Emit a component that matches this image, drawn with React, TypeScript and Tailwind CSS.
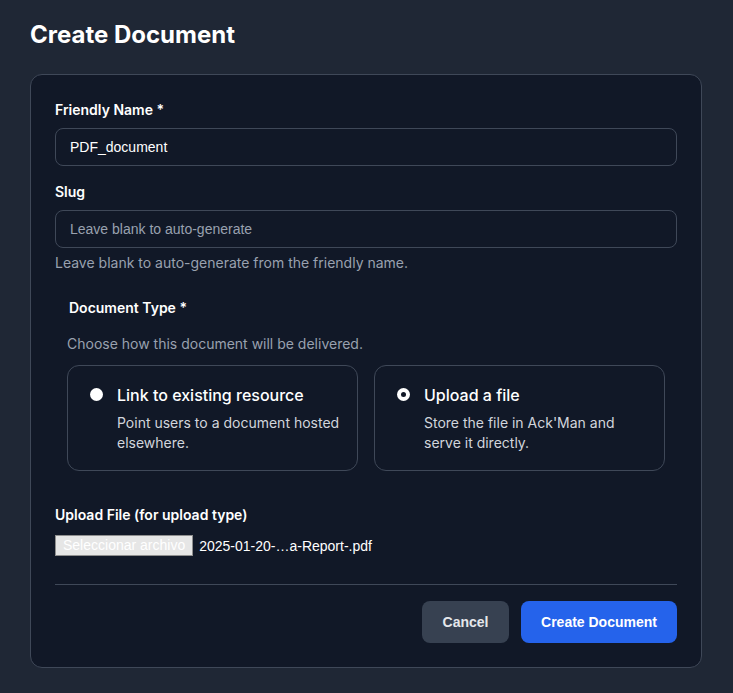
import React from 'react';

const RadioCard: React.FC<{ title: string; lines: string[]; checked?: boolean }> = ({ title, lines, checked }) => (
  <label className="flex-1 flex gap-[14px] rounded-xl border border-[#3f4858] pl-[22px] pr-3 pt-[17px] pb-[17px] cursor-pointer">
    <span className="mt-[5px] shrink-0">
      {checked ? (
        <span className="w-[13px] h-[13px] rounded-full bg-white flex items-center justify-center">
          <span className="block w-[5px] h-[5px] rounded-full bg-[#111827]" />
        </span>
      ) : (
        <span className="block w-[13px] h-[13px] rounded-full bg-white" />
      )}
    </span>
    <span className="flex flex-col">
      <span className="text-base font-medium text-white leading-6">{title}</span>
      <span className="mt-[6px] flex flex-col text-sm leading-5 text-gray-300">
        {lines.map(l => (
          <span key={l} className="whitespace-nowrap">{l}</span>
        ))}
      </span>
    </span>
  </label>
);

const App: React.FC = () => {
  return (
    <div className="min-h-[693px] bg-[#1f2735] pl-[30px] pr-[31px] pt-[19px] pb-[26px]" style={{ fontFamily: 'Inter, "Noto Sans", sans-serif' }}>
      <h1 className="text-2xl font-bold text-white leading-8">Create Document</h1>

      <div className="mt-[23px] rounded-xl border border-[#3f4858] bg-[#111827] px-6 pt-[25px] pb-[24px]">
        {/* Friendly name */}
        <label className="block text-sm font-semibold text-white leading-5">Friendly Name *</label>
        <input
          defaultValue="PDF_document"
          className="mt-2 block w-full h-[38px] rounded-lg border border-[#3f4858] bg-transparent px-[14px] text-sm text-white outline-none"
          style={{ fontFamily: '"Liberation Sans", Arial, sans-serif' }}
        />

        {/* Slug */}
        <label className="mt-4 block text-sm font-semibold text-white leading-5">Slug</label>
        <input
          placeholder="Leave blank to auto-generate"
          className="mt-2 block w-full h-[38px] rounded-lg border border-[#3f4858] bg-transparent px-[14px] text-sm text-white outline-none placeholder:text-gray-400"
          style={{ fontFamily: '"Liberation Sans", Arial, sans-serif' }}
        />
        <p className="mt-[5px] text-sm leading-5 text-gray-400">Leave blank to auto-generate from the friendly name.</p>

        {/* Document type */}
        <div className="mt-[25px] px-3">
          <div className="px-[2px] text-sm font-semibold text-white leading-5">Document Type *</div>
          <p className="mt-4 text-sm leading-5 text-gray-400">Choose how this document will be delivered.</p>
          <div className="mt-[11px] flex gap-4">
            <RadioCard title="Link to existing resource" lines={['Point users to a document hosted', 'elsewhere.']} />
            <RadioCard title="Upload a file" lines={["Store the file in Ack'Man and", 'serve it directly.']} checked />
          </div>
        </div>

        {/* Upload */}
        <label className="mt-[34px] block text-sm font-semibold text-white leading-5">Upload File (for upload type)</label>
        <div className="mt-[10px] flex items-center gap-[6px] text-sm text-white" style={{ fontFamily: '"Liberation Sans", Arial, sans-serif' }}>
          <span className="inline-block h-[21px] leading-[19px] px-[7px] border border-[#8f8f8f] bg-[#e6e6e6] text-white">Seleccionar archivo</span>
          <span>2025-01-20-…a-Report-.pdf</span>
        </div>

        <div className="mt-[28px] border-t border-[#3f4858]" />

        <div className="mt-4 flex justify-end gap-3" style={{ fontFamily: '"Liberation Sans", Arial, sans-serif' }}>
          <button className="h-[42px] w-[87px] rounded-lg bg-[#374151] text-sm font-bold text-gray-200">Cancel</button>
          <button className="h-[42px] w-[156px] rounded-lg bg-[#2563eb] text-sm font-bold text-white">Create Document</button>
        </div>
      </div>
    </div>
  );
};

export default App;
